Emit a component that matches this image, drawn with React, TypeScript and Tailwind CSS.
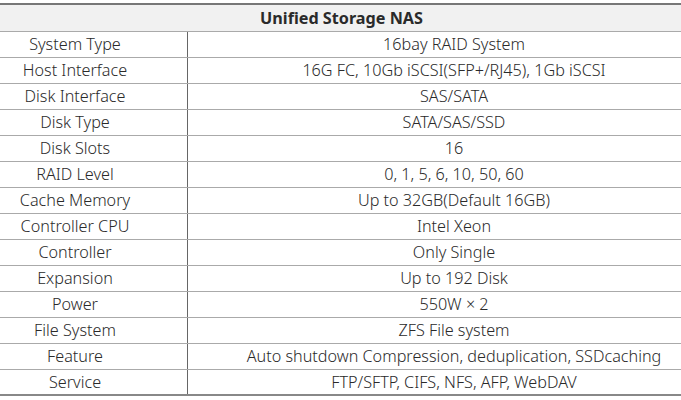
const rows: [string, string][] = [
  ["System Type", "16bay RAID System"],
  ["Host Interface", "16G FC, 10Gb iSCSI(SFP+/RJ45), 1Gb iSCSI"],
  ["Disk Interface", "SAS/SATA"],
  ["Disk Type", "SATA/SAS/SSD"],
  ["Disk Slots", "16"],
  ["RAID Level", "0, 1, 5, 6, 10, 50, 60"],
  ["Cache Memory", "Up to 32GB(Default 16GB)"],
  ["Controller CPU", "Intel Xeon"],
  ["Controller", "Only Single"],
  ["Expansion", "Up to 192 Disk"],
  ["Power", "550W × 2"],
  ["File System", "ZFS File system"],
  ["Feature", "Auto shutdown Compression, deduplication, SSDcaching"],
  ["Service", "FTP/SFTP, CIFS, NFS, AFP, WebDAV"],
];

export default function App() {
  return (
    <div className="w-[681px] h-[400px] overflow-hidden bg-white pt-[3px] text-[#2a2a2a] font-['Noto_Sans',sans-serif] text-[16.2px] font-light">
      {/* table is wider than the view, cropped on both sides */}
      <div className="w-[757px] -ml-[37px]">
        <div className="h-[29px] border-t-2 border-b border-t-[#777] border-b-[#aaa] bg-[#f1f1f1] flex items-center justify-center font-bold">
          Unified Storage NAS
        </div>
        {rows.map(([k, v], i) => (
          <div
            key={k}
            className={
              i === rows.length - 1
                ? "h-[26px] flex border-b-2 border-[#888]"
                : "h-[26px] flex border-b border-[#aaa]"
            }
          >
            <div className="w-[225px] shrink-0 border-r border-[#666] flex items-center justify-center">{k}</div>
            <div className="flex-1 flex items-center justify-center">{v}</div>
          </div>
        ))}
      </div>
    </div>
  );
}
